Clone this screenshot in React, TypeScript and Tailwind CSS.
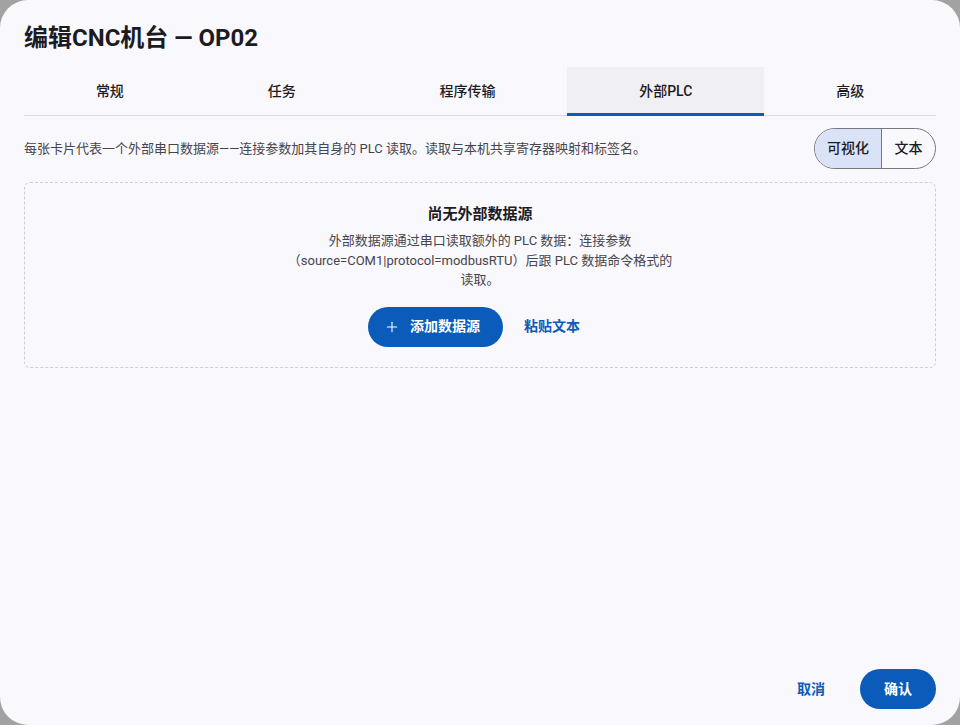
import { Plus } from "lucide-react"

const tabs = ["常规", "任务", "程序传输", "外部PLC", "高级"]

export default function App() {
  const font = { fontFamily: "Roboto, 'Noto Sans CJK SC', sans-serif" }
  return (
    <div className="w-[960px] h-[725px] bg-[#a2a2a2]" style={font}>
      <div className="w-full h-full rounded-[28px] bg-[#f9f8fd] flex flex-col px-6 text-[#1c1b1f]">
        <h1 className="pt-[22px] text-[24px] leading-[32px] font-bold">编辑CNC机台 — OP02</h1>

        <div className="mt-[13px] flex border-b border-[#dcdbe0]">
          {tabs.map((t, i) => (
            <div
              key={t}
              className={
                "flex-auto h-12 flex items-center justify-center text-[14px] font-medium relative " +
                (i === 3 ? "bg-[#f0eff4]" : "")
              }
            >
              {t}
              {i === 3 && <span className="absolute left-0 right-0 bottom-[-1px] h-[3px] bg-[#0b5cba]" />}
            </div>
          ))}
        </div>

        <div className="mt-3 flex items-center justify-between">
          <p className="text-[13px] text-[#46454b]">每张卡片代表一个外部串口数据源——连接参数加其自身的 PLC 读取。读取与本机共享寄存器映射和标签名。</p>
          <div className="flex h-[41px] rounded-full border border-[#79767f] overflow-hidden text-[14px] font-medium">
            <div className="w-[67px] flex items-center justify-center bg-[#d9e2f7] border-r border-[#79767f]">可视化</div>
            <div className="w-[53px] flex items-center justify-center">文本</div>
          </div>
        </div>

        <div className="mt-[13px] border border-dashed border-[#cfced5] rounded-md flex flex-col items-center pt-5 pb-5">
          <div className="text-[15px] leading-[22px] font-bold">尚无外部数据源</div>
          <p className="mt-[6px] max-w-[388px] text-center text-[13px] leading-[19.5px] text-[#46454b]">
            外部数据源通过串口读取额外的 PLC 数据：连接参数（source=COM1|protocol=modbusRTU）后跟 PLC 数据命令格式的读取。
          </p>
          <div className="mt-[17px] flex items-center gap-[9px]">
            <button className="h-10 pl-4 pr-[23px] rounded-full bg-[#0b5cba] text-white text-[14px] font-bold flex items-center gap-[10px]">
              <Plus size={16} strokeWidth={1.6} />
              添加数据源
            </button>
            <button className="h-10 px-3 text-[14px] font-bold text-[#0b5cba]">粘贴文本</button>
          </div>
        </div>

        <div className="flex-1" />

        <div className="pb-4 flex items-center justify-end gap-[35px]">
          <button className="text-[14px] font-bold text-[#0b5cba]">取消</button>
          <button className="h-10 w-[76px] rounded-full bg-[#0b5cba] text-white text-[14px] font-bold">确认</button>
        </div>
      </div>
    </div>
  )
}
